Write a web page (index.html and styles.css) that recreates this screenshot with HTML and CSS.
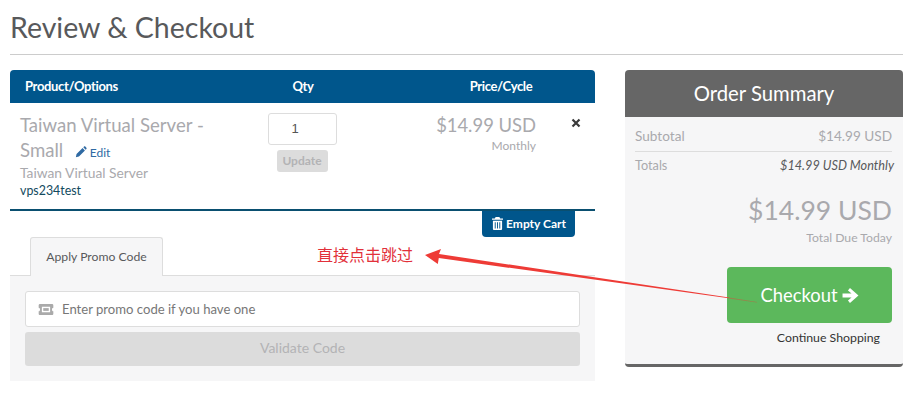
FILE: index.html
```html
<!DOCTYPE html>
<html lang="zh">
<head>
    <meta charset="UTF-8">
    <meta name="viewport" content="width=device-width, initial-scale=1.0">
    <title>Review &amp; Checkout</title>
    <link rel="stylesheet" href="styles.css">
</head>
<body>
    <h1 class="title">Review &amp; Checkout</h1>

    <div class="main">
        <!-- cart -->
        <div class="cart">
            <div class="cartHead">
                <div class="colProduct">Product/Options</div>
                <div class="colQty">Qty</div>
                <div class="colPrice">Price/Cycle</div>
            </div>
            <div class="item">
                <div class="colProduct">
                    <div class="itemName">Taiwan Virtual Server -</div>
                    <div class="itemLine">
                        <span class="itemName">Small</span>
                        <a class="edit" href="#">
                            <svg class="editIcon" viewBox="0 0 14 14"><path d="M1 13l.8-3.6 7-7 2.8 2.8-7 7zM9.7 1.6l.9-.9c.4-.4 1-.4 1.4 0l1.3 1.3c.4.4.4 1 0 1.4l-.9.9z"/></svg>Edit</a>
                    </div>
                    <div class="itemGroup">Taiwan Virtual Server</div>
                    <div class="itemDomain">vps234test</div>
                </div>
                <div class="colQty">
                    <div class="qtyBox">1</div>
                    <div class="updateBtn">Update</div>
                </div>
                <div class="colPrice">
                    <div class="price">$14.99 USD</div>
                    <div class="cycle">Monthly</div>
                </div>
                <div class="remove">
                    <svg viewBox="0 0 10 10"><path d="M1.5 1.5l7 7M8.5 1.5l-7 7"/></svg>
                </div>
            </div>
            <div class="emptyRow">
                <a class="emptyBtn" href="#">
                    <svg class="trash" viewBox="0 0 12 14"><path d="M4 0h4l1 1.500h3v1.500H0V1.500h3zM1 4h10v9c0 .6-.4 1-1 1H2c-.6 0-1-.4-1-1zM3 5.500v7h1v-7zM5.500 5.500v7h1v-7zM8 5.500v7h1v-7z"/></svg>Empty Cart</a>
            </div>

            <!-- promo -->
            <div class="tabs">
                <div class="tab">Apply Promo Code</div>
                <div class="note">直接点击跳过</div>
            </div>
            <div class="promo">
                <div class="promoInput">
                    <svg class="ticket" viewBox="0 0 16 12"><path d="M0 1.500C0 .7.500 0 1.500 0h13c1 0 1.500.7 1.500 1.500V4c-1 0-1.500 1-1.500 2s.5 2 1.500 2v2.500c0 .8-.5 1.500-1.500 1.500h-13C.5 12 0 11.300 0 10.500V8c1 0 1.500-1 1.500-2S1 4 0 4zM3.500 3v6h9V3z"/><path d="M5 4.500h6v3H5z"/></svg>
                    Enter promo code if you have one
                </div>
                <div class="validateBtn">Validate Code</div>
            </div>
        </div>

        <!-- order summary -->
        <div class="summary">
            <div class="summaryHead">Order Summary</div>
            <div class="summaryBody">
                <div class="sumRow sumSub"><span>Subtotal</span><span>$14.99 USD</span></div>
                <div class="sumRow sumTotals"><span>Totals</span><em>$14.99 USD Monthly</em></div>
                <div class="total">$14.99 USD</div>
                <div class="totalLabel">Total Due Today</div>
                <a class="checkoutBtn" href="#">Checkout
                    <svg class="arrowIcon" viewBox="0 0 16 14"><path d="M.5 5.200h8.500L5.600 2.200 7.500 0 15.500 7l-8 7-1.900-2.200L9 8.800H.5z"/></svg>
                </a>
                <a class="continue" href="#">Continue Shopping</a>
            </div>
        </div>
    </div>

    <!-- red annotation arrow drawn over the page -->
    <svg class="markup" viewBox="0 0 912 402">
        <path d="M425 255l16-6-2 5 290 43.500-.2 .8-290-40.300-1 6z"/>
        <path class="markupTail" d="M729 297.500l28 4.500-.1 .5-28-4z"/>
    </svg>
</body>
</html>
```

FILE: styles.css
```css
/* reset */
html, body{
    margin: 0;
    padding: 0;
}
body{
    position: relative;
    height: 402px;
    overflow: hidden;
    padding: 0 9px 0 10px;
    background: #fff;
    color: #58595b;
    font-family: Lato, "Noto Sans CJK SC", sans-serif;
    font-size: 14px;
}
a{
    text-decoration: none;
}

.title{
    margin: 0;
    height: 54px;
    border-bottom: 1px solid #ccc;
    color: #58595b;
    font-size: 28.5px;
    font-weight: 400;
    line-height: 55px;
}

.main{
    display: grid;
    grid-template-columns: 585px 278px;
    column-gap: 30px;
    margin-top: 15px;
}

/* cart */
.cartHead{
    display: flex;
    align-items: center;
    box-sizing: border-box;
    height: 33px;
    padding-bottom: 1px;
    border-radius: 4px 4px 0 0;
    background: #00568c;
    color: #fff;
    font-size: 13px;
    font-weight: 700;
    letter-spacing: -.35px;
}
.colProduct{
    width: 248px;
    box-sizing: border-box;
}
.cartHead .colProduct{
    padding-left: 15px;
}
.colQty{
    width: 90px;
    text-align: center;
}
.colPrice{
    width: 189px;
    text-align: right;
}
.cartHead .colPrice{
    width: 160px;
    margin-left: 73px;
    text-align: center;
}

.item{
    display: flex;
    align-items: flex-start;
    height: 106px;
    border-bottom: 2px solid #0a4f70;
}
.item .colProduct{
    width: 247px;
    padding: 10px 0 0 10px;
}
.itemName{
    color: #a9a9ad;
    font-size: 18.6px;
    line-height: 25px;
}
.itemLine{
    height: 25px;
    line-height: 25px;
}
.edit{
    margin-left: 8px;
    color: #2f6aa3;
    font-size: 12px;
}
.editIcon{
    width: 12px;
    height: 12px;
    margin-right: 3px;
    fill: #2f6aa3;
    vertical-align: -1px;
}
.itemGroup{
    color: #a9a9ad;
    font-size: 13.8px;
    line-height: 19px;
}
.itemDomain{
    color: #124a5e;
    font-size: 12.4px;
    line-height: 18px;
}

.item .colQty{
    display: flex;
    flex-direction: column;
    align-items: center;
    padding-top: 10px;
}
.qtyBox{
    box-sizing: border-box;
    width: 69px;
    height: 32px;
    padding-right: 14px;
    border: 1px solid #ddd;
    border-radius: 3px;
    color: #555;
    font-family: "Liberation Sans", sans-serif;
    font-size: 13px;
    line-height: 30px;
    text-align: center;
}
.updateBtn{
    width: 51px;
    height: 22px;
    margin-top: 5px;
    border-radius: 3px;
    background: #dcdcdc;
    color: #b3b3b5;
    font-size: 12px;
    font-weight: 700;
    line-height: 22px;
    text-align: center;
}
.item .colPrice{
    padding-top: 10px;
}
.price{
    color: #a9a9ad;
    font-size: 18.4px;
    line-height: 25px;
}
.cycle{
    color: #a9a9ad;
    font-size: 12px;
    line-height: 16px;
}
.remove{
    margin: 15px 0 0 35px;
    line-height: 0;
}
.remove svg{
    width: 10px;
    height: 10px;
    fill: none;
    stroke: #3a3a3a;
    stroke-width: 2.2;
}

.emptyRow{
    display: flex;
    justify-content: flex-end;
    padding-right: 20px;
}
.emptyBtn{
    display: flex;
    align-items: center;
    box-sizing: border-box;
    height: 26px;
    padding: 0 9px 1px 10px;
    border-radius: 0 0 4px 4px;
    background: #00568c;
    color: #fff;
    font-size: 12px;
    font-weight: 700;
}
.trash{
    width: 11px;
    height: 13px;
    margin-right: 3px;
    fill: #fff;
}

/* promo */
.tabs{
    display: flex;
    height: 38px;
    padding-left: 20px;
    border-bottom: 1px solid #ddd;
}
.tab{
    box-sizing: border-box;
    width: 133px;
    height: 39px;
    border: 1px solid #ddd;
    border-bottom: 0;
    border-radius: 3px 3px 0 0;
    background: #f6f6f7;
    color: #58595b;
    font-size: 12.2px;
    line-height: 37px;
    text-align: center;
}
.note{
    margin-left: 154px;
    color: #e2303a;
    font-size: 16px;
    line-height: 36px;
}
.promo{
    height: 105px;
    box-sizing: border-box;
    padding: 15px 15px 0;
    background: #f6f6f7;
}
.promoInput{
    display: flex;
    align-items: center;
    box-sizing: border-box;
    height: 36px;
    padding-left: 12px;
    border: 1px solid #ddd;
    border-radius: 3px;
    background: #fff;
    color: #777;
    font-size: 13.1px;
}
.ticket{
    width: 16px;
    height: 11px;
    margin-right: 8px;
    fill: #aaa;
    fill-rule: evenodd;
}
.validateBtn{
    height: 34px;
    margin-top: 5px;
    border-radius: 3px;
    background: #dcdcdc;
    color: #b3b3b5;
    font-size: 14px;
    line-height: 32px;
    text-align: center;
}

/* order summary */
.summary{
    height: 297px;
    border-bottom: 3px solid #666;
    border-radius: 4px;
    background: #f6f6f7;
    box-sizing: border-box;
}
.summaryHead{
    height: 47px;
    border-radius: 4px 4px 0 0;
    background: #666;
    color: #fff;
    font-size: 20.3px;
    line-height: 46px;
    text-align: center;
}
.summaryBody{
    display: flex;
    flex-direction: column;
    padding: 0 11px 0 10px;
}
.sumRow{
    display: flex;
    justify-content: space-between;
    color: #a9a9ad;
    font-size: 13.6px;
}
.sumSub{
    height: 34px;
    border-bottom: 1px solid #ddd;
    line-height: 38px;
}
.sumTotals{
    height: 27px;
    margin-right: -2px;
    font-size: 12.7px;
    line-height: 26px;
}
.sumTotals em{
    color: #58595b;
}
.total{
    margin-top: 13px;
    color: #a9a9ad;
    font-size: 26.5px;
    line-height: 36px;
    text-align: right;
}
.totalLabel{
    color: #a9a9ad;
    font-size: 12.2px;
    line-height: 20px;
    text-align: right;
}
.checkoutBtn{
    display: flex;
    align-items: center;
    justify-content: center;
    align-self: flex-end;
    width: 165px;
    height: 56px;
    margin-top: 19px;
    border-radius: 4px;
    background: #5cb85c;
    color: #fff;
    font-size: 18.4px;
}
.arrowIcon{
    width: 17px;
    height: 15px;
    margin-left: 4px;
    fill: #fff;
}
.continue{
    align-self: flex-end;
    margin: 7px 12px 0 0;
    color: #333;
    font-size: 12.3px;
    line-height: 16px;
}

/* annotation */
.markup{
    position: absolute;
    top: 0;
    left: 0;
    width: 912px;
    height: 402px;
    pointer-events: none;
}
.markup path{
    fill: #ee3b36;
}
.markup .markupTail{
    opacity: .45;
}
```
